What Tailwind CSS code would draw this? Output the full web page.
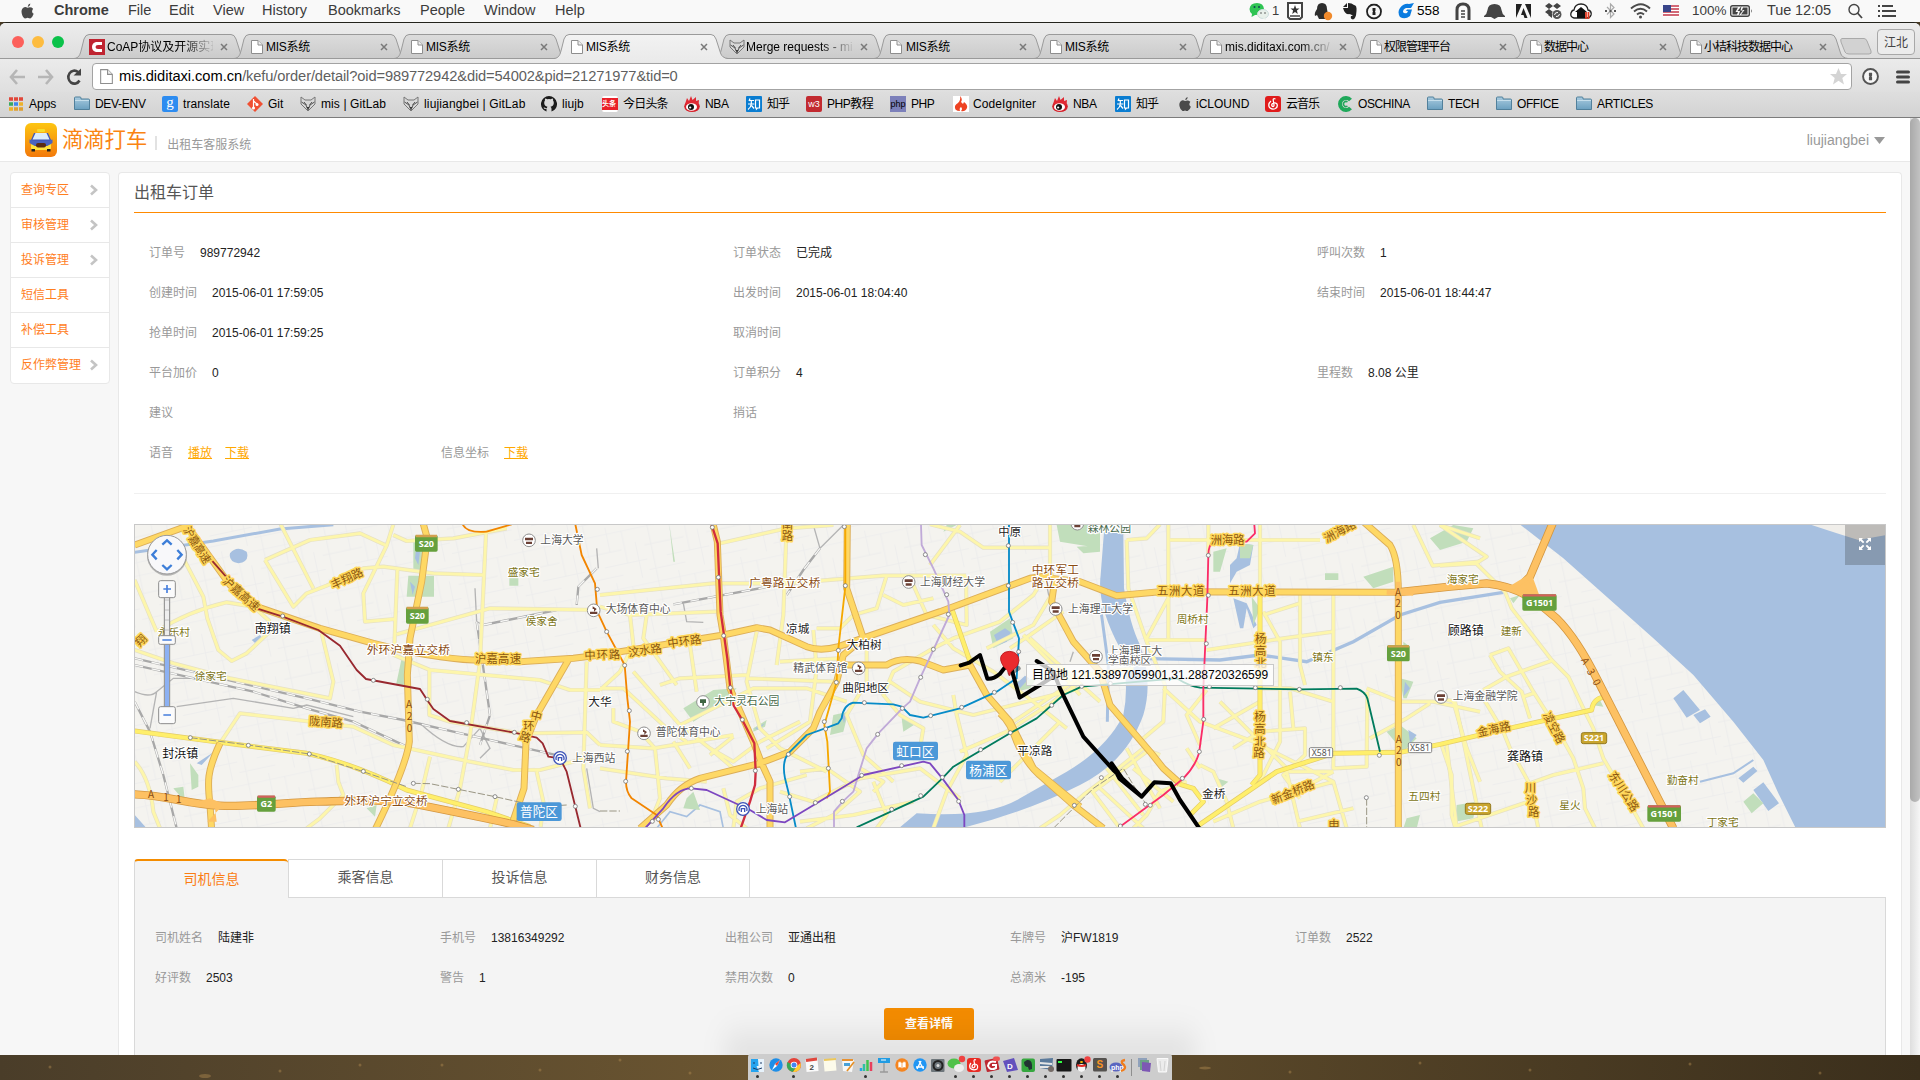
<!DOCTYPE html>
<html lang="zh-CN">
<head>
<meta charset="utf-8">
<title>MIS系统</title>
<script src="https://cdn.jsdelivr.net/npm/@tailwindcss/browser@4"></script>
</head>
<body class="w-[1920px] h-[1080px] overflow-hidden bg-[#4a3b24] font-['Liberation_Sans','Noto_Sans_CJK_SC',sans-serif] text-xs text-black">

<svg class="absolute size-0">
  <defs>
    <linearGradient id="gTab" x1="0" y1="0" x2="0" y2="1"><stop offset="0" stop-color="#dcdcdc"/><stop offset="1" stop-color="#cbcbcb"/></linearGradient>
    <linearGradient id="gOn" x1="0" y1="0" x2="0" y2="1"><stop offset="0" stop-color="#f2f2f2"/><stop offset="1" stop-color="#ebebeb"/></linearGradient>
    <linearGradient id="gFold" x1="0" y1="0" x2="0" y2="1"><stop offset="0" stop-color="#a9cbdf"/><stop offset="1" stop-color="#6ba0c0"/></linearGradient>
    <linearGradient id="gLogo" x1="0" y1="0" x2="0" y2="1"><stop offset="0" stop-color="#fdc612"/><stop offset="1" stop-color="#f3790b"/></linearGradient>
    <symbol id="tab" viewBox="0 0 174 25" preserveAspectRatio="none"><path d="M0 24.5C5 24 6 21 7.500 15L10 5Q11.500 .5 15 .5H157Q160.500 .5 162 5L166.500 19Q168 24 174 24.500Z" fill="url(#gTab)" stroke="#9a9a9a"/></symbol>
    <symbol id="tabOn" viewBox="0 0 174 25" preserveAspectRatio="none"><path d="M0 25C5 24 6 21 7.500 15L10 5Q11.500 .5 15 .5H157Q160.500 .5 162 5L166.500 19Q168 24 174 25Z" fill="url(#gOn)"/><path d="M0 24.5C5 24 6 21 7.500 15L10 5Q11.500 .5 15 .5H157Q160.500 .5 162 5L166.500 19Q168 24 174 24.500" fill="none" stroke="#9a9a9a"/></symbol>
    <symbol id="page" viewBox="0 0 16 16"><path d="M2.500 1.500H9L13.500 6V14.500H2.500Z" fill="#fff" stroke="#8e8e8e"/><path d="M9 1.500V6H13.500" fill="#eee" stroke="#8e8e8e"/></symbol>
    <symbol id="x" viewBox="0 0 8 8"><path d="M1 1L7 7M7 1L1 7" stroke="#7a7a7a" stroke-width="1.500"/></symbol>
    <symbol id="folder" viewBox="0 0 16 16"><path d="M.5 3V2Q.5 1 1.500 1H6Q7 1 7 2V3H14.500Q15.500 3 15.500 4V13.500H.5Z" fill="url(#gFold)" stroke="#51809b"/><path d="M1 4.500H15" stroke="#c5deeb"/></symbol>
    <symbol id="fox" viewBox="0 0 16 16"><path d="M1 1L5 4H11L15 1V8L8 15L1 8Z" fill="#d8d8d8" stroke="#777"/><path d="M1.500 6L6 9L8 14L10 9L14.500 6M4 6L6.500 9M12 6L9.500 9" stroke="#555" fill="none"/><path d="M6.500 11H9.500L8 13Z" fill="#333"/></symbol>
    <symbol id="apple" viewBox="0 0 16 18"><path d="M11 1Q8.500 1.500 8.200 4.500Q10.800 4.300 11 1M8 5.500Q5.500 4 3.500 5.500Q1 7.500 1.800 11.500Q2.800 16 5.200 17Q6.500 17 8 16.300Q9.800 17 11 17Q13.500 15.500 14.600 12Q11.500 10 14 6.500Q11.500 4 8 5.500Z" fill="#4a4a4a"/></symbol>
    <symbol id="weibo" viewBox="0 0 16 16"><ellipse cx="8" cy="10.500" rx="7.800" ry="5.500" fill="#d5202a"/><path d="M1 8L3 2L5 5L7 0L8.500 4L12 1L12 5L15 4L14.500 9Z" fill="#e02a34"/><ellipse cx="7.500" cy="11" rx="5.500" ry="3.800" fill="#fff"/><circle cx="7" cy="11" r="3" fill="#111"/><circle cx="6.200" cy="11.500" r="1.100" fill="#fff"/></symbol>
    <symbol id="zhihu" viewBox="0 0 16 16"><rect width="16" height="16" rx="1" fill="#0a7dd1"/><path d="M4 2.500L3 5M3.500 4.500H8M2 8H8.300M5.300 4.500V8Q5 11.500 2 13.500M5.500 9.500L8 12.500M9.500 4H13.500V12H11.500L10.500 13V12H9.500Z" stroke="#fff" stroke-width="1.200" fill="none"/></symbol>
    <symbol id="onep" viewBox="0 0 16 16"><circle cx="8" cy="8" r="7" fill="#f6f6f6" stroke="currentColor" stroke-width="1.800"/><path d="M6.500 4.500H9.500V7L9 8L9.500 9V11.500H6.500V9L7 8L6.500 7Z" fill="currentColor"/></symbol>
    <symbol id="netease" viewBox="0 0 16 16"><rect width="16" height="16" rx="3" fill="#e01b1b"/><path d="M10.500 3Q8 2 8.200 4L9 9Q9 11 7.500 10.500Q6 9 7.500 7.500Q10 6 12 8Q13 11 10.500 12.500Q7 14 4.500 11.500Q2.500 8 6 5" stroke="#fff" stroke-width="1.300" fill="none"/></symbol>
    <symbol id="chev" viewBox="0 0 10 12"><path d="M2 1.500L7 6L2 10.500" stroke="#c4c4c4" stroke-width="2.600" fill="none"/></symbol>
  </defs>
</svg>

<!-- system menu bar -->
<header class="flex h-[22px] items-center bg-[#f9f9f9] text-[14.500px] text-[#3c3c3c]">
  <div class="w-[54px] pl-[20px]"><svg class="w-[15px] h-[18px]"><use href="#apple"/></svg></div>
  <b class="w-[74px]">Chrome</b><span class="w-[41px]">File</span><span class="w-[44px]">Edit</span><span class="w-[49px]">View</span><span class="w-[66px]">History</span><span class="w-[92px]">Bookmarks</span><span class="w-[64px]">People</span><span class="w-[71px]">Window</span><span>Help</span>
  <div class="ml-auto flex w-[671px] items-center text-[14px]">
    <svg class="w-[20px] h-[20px] mr-[3px]" viewBox="0 0 20 20"><path d="M8 2Q1 2 .5 8Q.5 11 3 13L2.500 16L6 14Q15 14 15 8Q14.500 2 8 2Z" fill="#2fc454"/><circle cx="5.500" cy="6" r="1" fill="#145"/><circle cx="10" cy="6" r="1" fill="#145"/><ellipse cx="14" cy="13" rx="5.500" ry="4.500" fill="#e8f0ea" stroke="#cdd"/><path d="M16 16L17 19L13 17" fill="#e8f0ea"/><circle cx="12" cy="12" r=".8" fill="#555"/><circle cx="16" cy="12" r=".8" fill="#555"/></svg>
    <span class="w-[15px] text-[13px]">1</span>
    <svg class="w-[27px] h-[18px]" viewBox="0 0 27 18"><path d="M1 1H15V15L13 17H3L1 15Z" fill="#fff" stroke="#444" stroke-width="2"/><path d="M8 3L9.200 6.500H12.500L9.900 8.500L10.800 12L8 10L5.200 12L6.100 8.500L3.500 6.500H6.800Z" fill="#333"/><path d="M3 14H13" stroke="#444" stroke-width="1.500"/></svg>
    <svg class="w-[28px] h-[19px]" viewBox="0 0 28 19"><path d="M8 1Q3 1 3 7Q0 11 1 14L3 13L5 17H12L15 12Q13 10 13 7Q13 1 8 1" fill="#2d2d2d"/><circle cx="14" cy="14" r="4.200" fill="#f08a2c"/></svg>
    <svg class="w-[24px] h-[19px]" viewBox="0 0 24 19"><path d="M1 5L5 1V5ZM6 1Q10 1 12 3Q15 3 14.500 9Q14 17 11 17.500Q8 17 9 14L11 14Q9 12 7 12Q3 13 1 6H6Z" fill="#222"/></svg>
    <svg class="w-[32px] h-[17px] text-[#222]" viewBox="0 0 32 16"><use href="#onep" width="16" height="16"/></svg>
    <svg class="w-[19px] h-[18px]" viewBox="0 0 19 18"><path d="M16 1L13 6H8Q5 7 5 10Q6 12 9 11L10 9H8L9 7.500H14L12 14Q7 18 2 15Q-1 10 2 6Q6 1 11 2Z" fill="#0b7ce0"/></svg>
    <span class="w-[38px] text-[13.500px] text-black">558</span>
    <svg class="w-[29px] h-[19px]" viewBox="0 0 29 19"><path d="M2 18V8Q2 2 8 2T14 8V18" fill="none" stroke="#444" stroke-width="3"/><path d="M5 18V9Q5 5 8 5T11 9V18" fill="none" stroke="#fff" stroke-width="1"/><path d="M6 9H10M6 12H10M6 15H10" stroke="#444" stroke-width="1.600"/></svg>
    <svg class="w-[32px] h-[18px]" viewBox="0 0 32 18"><path d="M0 14Q3 12 3.500 8Q4 2 10.500 2T17.500 8Q18 12 21 14V15H0ZM7 15H14L10.500 17Z" fill="#444"/></svg>
    <svg class="w-[28px] h-[16px]" viewBox="0 0 28 16"><path d="M0 1H6L0 15ZM9 1H15V15ZM7.500 5L11.500 15H8.500L7.500 12H5Z" fill="#222"/></svg>
    <svg class="w-[26px] h-[18px]" viewBox="0 0 26 18"><path d="M5 1L9 4L5 7L1 4ZM13 1L17 4L13 7L9 4ZM5 7L9 10L5 13L1 10ZM4 13L8 11V16Z" fill="#444"/><circle cx="13" cy="12.500" r="4.500" fill="#555"/><path d="M10.500 13Q11 10 14 10.500M15.500 12Q15 15 12 14.500" stroke="#fff" fill="none"/></svg>
    <svg class="w-[35px] h-[19px]" viewBox="0 0 35 19"><path d="M4 16Q0 15 1 11Q2 8 4 8Q5 2 11 2T18 8Q22 9 21 13Q20 16 17 16Z" fill="#fff" stroke="#222" stroke-width="1.300"/><path d="M5 10L11 5L17 10H15V16H7V10Z" fill="#111"/><path d="M16 10V17M18.500 10V17" stroke="#e33a22" stroke-width="1.800"/></svg>
    <svg class="w-[25px] h-[18px]" viewBox="0 0 25 18"><path d="M2 5L9 12L5.500 15.500V2L9 5.500L2 12.500" fill="none" stroke="#aaa" stroke-width="1.200"/><path d="M0 9H2M4.500 9H6.500M9 9H11" stroke="#555" stroke-width="2"/></svg>
    <svg class="w-[33px] h-[18px]" viewBox="0 0 33 18"><path d="M1 6.500Q11 -2 20 6.500M4 9.500Q10.500 4 17 9.500M7 12.500Q10.500 9.500 14 12.500" fill="none" stroke="#4a4a4a" stroke-width="1.900"/><circle cx="10.500" cy="15" r="1.500" fill="#4a4a4a"/></svg>
    <svg class="w-[29px] h-[14px]" viewBox="0 0 29 14"><rect y="1" width="16" height="12" fill="#fff"/><path d="M0 2H16M0 5H16M0 8H16M0 11H16" stroke="#c4374a" stroke-width="1.300"/><rect y="1" width="8" height="7" fill="#38458a"/></svg>
    <span class="w-[38px] text-[13.500px]">100%</span>
    <svg class="w-[37px] h-[16px]" viewBox="0 0 37 16"><rect x=".7" y="2.700" width="18.600" height="10.600" rx="2" fill="none" stroke="#444" stroke-width="1.400"/><path d="M21 6Q22.500 8 21 10Z" fill="#444"/><path d="M2.500 4.500H8L5.500 9H8L7 11.500H2.500ZM17.500 11.500H11L14.500 7H12L13 4.500H17.500Z" fill="#444"/><path d="M11.500 3L7.500 8H10L8.500 13L13 7.500H10.500Z" fill="#444"/></svg>
    <span class="w-[81px] text-[14.500px] tracking-[-0.1px]">Tue 12:05</span>
    <svg class="w-[30px] h-[16px]" viewBox="0 0 30 16"><circle cx="6" cy="6.500" r="5" fill="none" stroke="#444" stroke-width="1.400"/><path d="M9.500 10L14 15" stroke="#444" stroke-width="1.800"/></svg>
    <svg class="w-[18px] h-[14px]" viewBox="0 0 18 14"><path d="M4 2H15M4 7H18M4 12H18M0 2H2M0 7H2M0 12H2" stroke="#444" stroke-width="2"/></svg>
  </div>
</header>

<div class="relative h-[1033px] rounded-t-md border-t border-[#23231c] bg-white overflow-hidden">
  <!-- tab strip -->
  <div class="relative flex h-[36px] items-end border-b border-[#9a9a9a] bg-linear-to-b from-[#ededed] to-[#dedede] pl-[74px]">
    <div class="absolute top-[13px] left-[12px] flex gap-[8px]"><i class="size-[12px] rounded-full bg-[#fc605b]"></i><i class="size-[12px] rounded-full bg-[#fdbc40]"></i><i class="size-[12px] rounded-full bg-[#0bc24a]"></i></div>
    <div class="relative w-[160px] h-[24px]"><svg class="absolute w-[174px] h-[25px]"><use href="#tab"/></svg><div class="relative flex h-full items-center pt-[2px] pl-[15px]">
      <svg class="size-4" viewBox="0 0 16 16"><rect width="16" height="16" fill="#bf2431"/><path d="M13 3H7Q3 4 3 8T7 13H13V10H9Q6.500 10 6.500 8T9 6H13Z" fill="#fff"/></svg><span class="ml-[2px] w-[106px] overflow-hidden whitespace-nowrap bg-linear-to-r from-black from-70% to-black/10 bg-clip-text text-transparent">CoAP协议及开源实现</span><svg class="ml-[7px] size-[8px]"><use href="#x"/></svg></div></div>
    <div class="relative w-[160px] h-[24px]"><svg class="absolute w-[174px] h-[25px]"><use href="#tab"/></svg><div class="relative flex h-full items-center pt-[2px] pl-[15px]"><svg class="size-4"><use href="#page"/></svg><span class="ml-[1px] w-[114px] tracking-[-0.3px]">MIS系统</span><svg class="size-[8px]"><use href="#x"/></svg></div></div>
    <div class="relative w-[160px] h-[24px]"><svg class="absolute w-[174px] h-[25px]"><use href="#tab"/></svg><div class="relative flex h-full items-center pt-[2px] pl-[15px]"><svg class="size-4"><use href="#page"/></svg><span class="ml-[1px] w-[114px] tracking-[-0.3px]">MIS系统</span><svg class="size-[8px]"><use href="#x"/></svg></div></div>
    <div class="relative z-10 w-[160px] h-[24px]"><svg class="absolute w-[174px] h-[25px]"><use href="#tabOn"/></svg><div class="relative flex h-full items-center pt-[2px] pl-[15px]"><svg class="size-4"><use href="#page"/></svg><span class="ml-[1px] w-[114px] tracking-[-0.3px]">MIS系统</span><svg class="size-[8px]"><use href="#x"/></svg></div></div>
    <div class="relative w-[160px] h-[24px]"><svg class="absolute w-[174px] h-[25px]"><use href="#tab"/></svg><div class="relative flex h-full items-center pt-[2px] pl-[15px]"><svg class="size-4"><use href="#fox"/></svg><span class="ml-[1px] w-[106px] overflow-hidden whitespace-nowrap bg-linear-to-r from-black from-70% to-black/10 bg-clip-text text-transparent">Merge requests - mis</span><svg class="ml-[8px] size-[8px]"><use href="#x"/></svg></div></div>
    <div class="relative w-[160px] h-[24px]"><svg class="absolute w-[174px] h-[25px]"><use href="#tab"/></svg><div class="relative flex h-full items-center pt-[2px] pl-[14px]"><svg class="size-4"><use href="#page"/></svg><span class="ml-[2px] w-[113px] tracking-[-0.3px]">MIS系统</span><svg class="size-[8px]"><use href="#x"/></svg></div></div>
    <div class="relative w-[160px] h-[24px]"><svg class="absolute w-[174px] h-[25px]"><use href="#tab"/></svg><div class="relative flex h-full items-center pt-[2px] pl-[14px]"><svg class="size-4"><use href="#page"/></svg><span class="ml-[1px] w-[114px] tracking-[-0.3px]">MIS系统</span><svg class="size-[8px]"><use href="#x"/></svg></div></div>
    <div class="relative w-[160px] h-[24px]"><svg class="absolute w-[174px] h-[25px]"><use href="#tab"/></svg><div class="relative flex h-full items-center pt-[2px] pl-[14px]"><svg class="size-4"><use href="#page"/></svg><span class="ml-[1px] w-[106px] overflow-hidden whitespace-nowrap bg-linear-to-r from-black from-70% to-black/10 bg-clip-text text-transparent">mis.diditaxi.com.cn/</span><svg class="ml-[8px] size-[8px]"><use href="#x"/></svg></div></div>
    <div class="relative w-[160px] h-[24px]"><svg class="absolute w-[174px] h-[25px]"><use href="#tab"/></svg><div class="relative flex h-full items-center pt-[2px] pl-[14px]"><svg class="size-4"><use href="#page"/></svg><span class="w-[115px] tracking-[-1px]">权限管理平台</span><svg class="size-[8px]"><use href="#x"/></svg></div></div>
    <div class="relative w-[160px] h-[24px]"><svg class="absolute w-[174px] h-[25px]"><use href="#tab"/></svg><div class="relative flex h-full items-center pt-[2px] pl-[14px]"><svg class="size-4"><use href="#page"/></svg><span class="w-[115px] tracking-[-1px]">数据中心</span><svg class="size-[8px]"><use href="#x"/></svg></div></div>
    <div class="relative w-[160px] h-[24px]"><svg class="absolute w-[174px] h-[25px]"><use href="#tab"/></svg><div class="relative flex h-full items-center pt-[2px] pl-[14px]"><svg class="size-4"><use href="#page"/></svg><span class="w-[115px] tracking-[-1px]">小桔科技数据中心</span><svg class="size-[8px]"><use href="#x"/></svg></div></div>
    <svg class="ml-[5px] mb-[3px] w-[34px] h-[17px]" viewBox="0 0 34 17"><path d="M3 .5H25Q27 .5 28 3L32 13Q33 16 30 16H10Q7 16 6 14L2 4Q1 .5 3 .5Z" fill="#d2d2d2" stroke="#a9a9a9"/></svg>
    <div class="ml-[4px] mb-[3px] flex h-[26px] w-[38px] items-center justify-center rounded border border-[#a8a8a8] bg-[#ececec] pt-[2px] text-[#444]">江北</div>
  </div>
  <!-- toolbar -->
  <div class="flex h-[33px] items-center bg-linear-to-b from-[#ebebeb] to-[#dfdfdf] pt-[2px] pl-[9px]">
    <svg class="w-[83px] h-[22px]" viewBox="0 0 83 22"><path d="M8 4L2 11L8 18M2 11H16M37 4L43 11L37 18M43 11H29" stroke="#b6b6b6" stroke-width="2.600" fill="none"/><path d="M70.500 14.500A6 6.500 0 1 1 69 6" stroke="#444" stroke-width="2.600" fill="none"/><path d="M72 2.500V9.500H64.500Z" fill="#444"/></svg>
    <div class="flex h-[27px] w-[1760px] items-center rounded-sm border border-[#a3a3a3] bg-white pl-[5px] text-[14.700px]"><svg class="mr-[4px] size-[17px]"><use href="#page"/></svg><span class="tracking-[-0.05px]">mis.diditaxi.com.cn</span><span class="tracking-[-0.13px] text-[#5f5f5f]">/kefu/order/detail?oid=989772942&amp;did=54002&amp;pid=21271977&amp;tid=0</span>
      <svg class="ml-auto mr-[4px] size-[17px]" viewBox="0 0 17 17"><path d="M8.500 0L11 6H17L12.300 10L14 16.500L8.500 12.700L3 16.500L4.700 10L0 6H6Z" fill="#d4d4d4"/></svg></div>
    <svg class="ml-[10px] size-[17px] text-[#555]"><use href="#onep"/></svg>
    <svg class="ml-[17px] w-[14px] h-[14px]" viewBox="0 0 14 14"><path d="M1.500 2H12.500M1.500 7H12.500M1.500 12H12.500" stroke="#444" stroke-width="3" stroke-linecap="round"/></svg>
  </div>
  <!-- bookmarks -->
  <div class="flex h-[26px] items-center border-b border-[#7c7c7c] bg-linear-to-b from-[#dedede] to-[#d3d3d3] pb-[2px] pl-[9px] whitespace-nowrap">
    <div class="flex w-[65px] items-center gap-[6px]"><svg class="size-[14px]" viewBox="0 0 14 14"><path d="M0 2H4M5 2H9M10 2H14" stroke="#e0473a" stroke-width="3.500"/><path d="M0 7H4" stroke="#39a861" stroke-width="3.500"/><path d="M5 7H9" stroke="#3e86ee" stroke-width="3.500"/><path d="M10 7H14M0 12H4" stroke="#edb22a" stroke-width="3.500"/><path d="M5 12H9M10 12H14" stroke="#e0a030" stroke-width="3.500"/></svg>Apps</div>
    <div class="flex w-[88px] items-center gap-[5px]"><svg class="size-4"><use href="#folder"/></svg><span class="tracking-[-0.3px]">DEV-ENV</span></div>
    <div class="flex w-[85px] items-center gap-[5px]"><span class="flex size-4 items-center justify-center rounded-[2px] bg-[#2d8cf0] font-['Liberation_Serif',serif] text-[15px] leading-none text-white pb-[3px]">g</span><span class="tracking-[0.100px]">translate</span></div>
    <div class="flex w-[53px] items-center gap-[5px]"><svg class="size-4" viewBox="0 0 16 16"><path d="M8 0L16 8L8 16L0 8Z" fill="#f05033"/><path d="M6.500 3V13M6.500 5L10 8" stroke="#fff" stroke-width="1.200"/><circle cx="6.500" cy="12" r="1.500" fill="#fff"/><circle cx="10" cy="8.500" r="1.500" fill="#fff"/></svg>Git</div>
    <div class="flex w-[103px] items-center gap-[5px]"><svg class="size-4"><use href="#fox"/></svg><span class="tracking-[0.100px]">mis | GitLab</span></div>
    <div class="flex w-[138px] items-center gap-[5px]"><svg class="size-4"><use href="#fox"/></svg><span class="tracking-[0.150px]">liujiangbei | GitLab</span></div>
    <div class="flex w-[61px] items-center gap-[5px]"><svg class="size-4" viewBox="0 0 16 16"><path d="M8 0A8 8 0 0 0 5.500 15.600V13Q3 13.500 2.500 11.500Q4 11 5 12.500L6 12Q6 11 6.500 10.700Q3.200 10 3.200 7Q3.200 5.500 4 4.600Q3.700 3.500 4.200 2.500Q5.200 2.500 6.300 3.300Q8 2.800 9.700 3.300Q10.800 2.500 11.800 2.500Q12.300 3.500 12 4.600Q12.800 5.500 12.800 7Q12.800 10 9.500 10.700Q10.500 11.500 10.500 13V15.600A8 8 0 0 0 8 0Z" fill="#1b1b1b"/></svg><span class="tracking-[0.100px]">liujb</span></div>
    <div class="flex w-[82px] items-center gap-[5px]"><span class="flex size-4 items-center rounded-[2px] border-y-2 border-white bg-[#ea1f28] text-[7px] font-bold leading-none text-white">头条</span><span class="tracking-[-0.8px]">今日头条</span></div>
    <div class="flex w-[62px] items-center gap-[5px]"><svg class="size-4"><use href="#weibo"/></svg><span class="tracking-[-0.3px]">NBA</span></div>
    <div class="flex w-[60px] items-center gap-[5px]"><svg class="size-4"><use href="#zhihu"/></svg><span class="tracking-[-1px]">知乎</span></div>
    <div class="flex w-[84px] items-center gap-[5px]"><span class="flex size-4 items-center justify-center rounded-[2px] bg-[#c22a30] text-[9px] text-white">w3</span><span class="tracking-[-0.5px]">PHP教程</span></div>
    <div class="flex w-[63px] items-center gap-[5px]"><span class="flex size-4 items-center justify-center bg-[#7c80ba] text-[9px] text-black">php</span><span class="tracking-[-0.4px]">PHP</span></div>
    <div class="flex w-[99px] items-center gap-[4px]"><svg class="size-4" viewBox="0 0 16 16"><rect width="16" height="16" fill="#fff"/><path d="M7 0Q10 3 8 6L10 8L11 6Q15 9 14 12Q12 16 8 15Q10 13 8 11Q6 12 7 15Q1 15 2 10Q3 8 5 7Q8 4 7 0Z" fill="#ee4323"/></svg><span class="tracking-[0.100px]">CodeIgniter</span></div>
    <div class="flex w-[63px] items-center gap-[5px]"><svg class="size-4"><use href="#weibo"/></svg><span class="tracking-[-0.3px]">NBA</span></div>
    <div class="flex w-[62px] items-center gap-[5px]"><svg class="size-4"><use href="#zhihu"/></svg><span class="tracking-[-1px]">知乎</span></div>
    <div class="flex w-[88px] items-center gap-[3px]"><svg class="size-4"><use href="#apple"/></svg><span>iCLOUND</span></div>
    <div class="flex w-[72px] items-center gap-[5px]"><svg class="size-4"><use href="#netease"/></svg><span class="tracking-[-1px]">云音乐</span></div>
    <div class="flex w-[90px] items-center gap-[5px]"><svg class="size-4" viewBox="0 0 16 16"><path d="M13.500 4A6 6 0 1 0 13.500 12" fill="none" stroke="#1fa85a" stroke-width="4"/><path d="M10.500 6A2.500 2.500 0 1 0 10.500 10" fill="none" stroke="#1fa85a" stroke-width="1.500"/></svg><span class="tracking-[-0.400px]">OSCHINA</span></div>
    <div class="flex w-[69px] items-center gap-[5px]"><svg class="size-4"><use href="#folder"/></svg><span class="tracking-[-0.4px]">TECH</span></div>
    <div class="flex w-[80px] items-center gap-[5px]"><svg class="size-4"><use href="#folder"/></svg><span class="tracking-[-0.4px]">OFFICE</span></div>
    <div class="flex items-center gap-[5px]"><svg class="size-4"><use href="#folder"/></svg><span class="tracking-[-0.3px]">ARTICLES</span></div>
  </div>

  <!-- web page -->
  <div class="flex h-[937px]">
    <div class="flex w-[1910px] flex-col bg-[#f7f7f7]">
      <div class="flex h-[44px] items-center border-b border-[#e8e8e8] bg-white pl-[25px]">
        <svg class="w-[32px] h-[34px]" viewBox="0 0 32 34"><rect width="32" height="34" rx="6" fill="url(#gLogo)"/><rect x="12" y="6" width="8" height="3" rx="1" fill="#f7dd2d"/><path d="M9 10H23L26 17V24H6V17Z" fill="#3d55b5"/><path d="M10.500 10H21.500L24.500 16.500H7.500Z" fill="#dcecfa"/><path d="M4.500 16.500L8 17.500H24L27.500 16.500V20L24 22H8L4.500 20Z" fill="#4a63c0"/><path d="M6 21L10 23H22L26 21V25Q26 27 24 27H8Q6 27 6 25Z" fill="#ffe23c"/><rect x="11" y="20" width="10" height="4.500" rx="2" fill="#5a2c12"/><rect x="6.500" y="26" width="3.500" height="2.500" fill="#222"/><rect x="22" y="26" width="3.500" height="2.500" fill="#222"/></svg>
        <span class="ml-[5px] mt-[3px] text-[21.300px] leading-none text-[#fa8412]">滴滴打车</span>
        <span class="ml-[8px] mt-[7px] h-[14px] w-[2px] bg-[#e2e2e2]"></span>
        <span class="ml-[10px] mt-[11px] text-[#999]">出租车客服系统</span>
        <span class="ml-auto mt-[2px] text-[14px] text-[#999]">liujiangbei</span><svg class="ml-[5px] mr-[25px] mt-[2px] w-[11px] h-[7px]" viewBox="0 0 11 7"><path d="M0 0H11L5.500 7Z" fill="#999"/></svg>
      </div>
      <div class="flex flex-1 pt-[10px] pl-[10px]">
        <nav class="h-[212px] w-[100px] rounded border border-[#e8e8e8] bg-white text-[#ff7e1e]">
          <div class="flex h-[35px] items-center justify-between border-b border-[#e8e8e8] pl-[10px] pr-[10px]">查询专区<svg class="w-[10px] h-[12px]"><use href="#chev"/></svg></div>
          <div class="flex h-[35px] items-center justify-between border-b border-[#e8e8e8] pl-[10px] pr-[10px]">审核管理<svg class="w-[10px] h-[12px]"><use href="#chev"/></svg></div>
          <div class="flex h-[35px] items-center justify-between border-b border-[#e8e8e8] pl-[10px] pr-[10px]">投诉管理<svg class="w-[10px] h-[12px]"><use href="#chev"/></svg></div>
          <div class="flex h-[35px] items-center border-b border-[#e8e8e8] pl-[10px]">短信工具</div>
          <div class="flex h-[35px] items-center border-b border-[#e8e8e8] pl-[10px]">补偿工具</div>
          <div class="flex h-[34px] items-center justify-between pl-[10px] pr-[10px]">反作弊管理<svg class="w-[10px] h-[12px]"><use href="#chev"/></svg></div>
        </nav>
        <main class="ml-[8px] w-[1784px] rounded-t border border-b-0 border-[#e8e8e8] bg-white px-[15px]">
          <h1 class="h-[40px] border-b border-[#ff8a00] text-[16px] leading-[39px] text-[#555]">出租车订单</h1>
          <div class="grid h-[281px] grid-cols-[584px_584px_auto] content-start border-b border-[#f0f0f0] pt-[20px] pl-[15px] leading-10 text-[#222] [&_i]:mr-[15px] [&_i]:not-italic [&_i]:text-[#999] [&>div]:h-10">
            <div><i>订单号</i>989772942</div><div><i>订单状态</i>已完成</div><div><i>呼叫次数</i>1</div>
            <div><i>创建时间</i>2015-06-01 17:59:05</div><div><i>出发时间</i>2015-06-01 18:04:40</div><div><i>结束时间</i>2015-06-01 18:44:47</div>
            <div><i>抢单时间</i>2015-06-01 17:59:25</div><div class="col-span-2"><i>取消时间</i></div>
            <div><i>平台加价</i>0</div><div><i>订单积分</i>4</div><div><i>里程数</i>8.08 公里</div>
            <div><i>建议</i></div><div class="col-span-2"><i>捎话</i></div>
            <div class="flex"><span class="w-[292px]"><i>语音</i><a class="mr-[13px] text-[#ffa800] underline">播放</a><a class="text-[#ffa800] underline">下载</a></span><span><i>信息坐标</i><a class="text-[#ffa800] underline">下载</a></span></div>
          </div>
          <!-- map -->
          <div class="relative mt-[30px] h-[304px] w-[1752px] border border-[#c8c8c8] bg-[#f4f3ef]">
<svg class="h-[302px] w-[1750px]" viewBox="45 30 5250 906" font-family="'Noto Sans CJK SC',sans-serif" font-size="34">
<defs>
<pattern id="streets" width="190" height="170" patternUnits="userSpaceOnUse" patternTransform="rotate(-12)"><path d="M0 20H190M0 75H120M60 118H190M20 0V170M85 0V75M130 20V118M165 60V170M0 150H110" stroke="#ececec" stroke-width="2.500" fill="none"/></pattern>
<g id="minor">
<g><path d="M44 195L110 350M44 405L160 445L330 490L630 550L640 500L605 355M110 350Q200 290 320 262L400 275L450 320M190 130L250 245L262 310L295 405L335 438L380 415L460 340M435 135L520 275L560 235L620 212L730 160L790 155L940 175L1090 180M435 135L570 75L720 55L800 92L730 235L735 320L825 312M482 28L580 220M800 92L820 28M820 60L860 78L1000 70L1160 40M832 165L822 420L930 465L1260 495L1350 525L1440 525M1098 55L1080 440L1050 660L1020 820L985 940M830 358L1110 280L1440 285M928 465V600L990 620L1200 655L1400 652L1440 690M44 740Q90 790 100 890L120 940M300 685L360 595L700 635L820 690L1050 740L1180 765L1260 765L1440 720M930 725L905 830L870 940M1400 440L1390 760L1410 880M1250 770L1270 860L1262 935M650 750L655 800L670 840L600 910L560 940M1130 850L1110 940"/></g>
<g transform="translate(1440)"><path d="M0 240L340 205L560 205L850 182H1098M360 85L560 40L700 30M560 30L550 300L530 450M0 275L90 300L350 290M90 300L100 390L60 470L0 525M140 300L130 370L230 510M270 390L290 530M0 520L70 520L200 640L260 680M180 510L240 490L440 480M470 350L440 500L480 640L540 700L680 770M440 490L700 500M100 470L240 630L330 700L400 760M240 630L460 520L620 520L740 560M0 690L160 700L400 660M0 760L200 790L320 800M40 580L40 620L120 650L165 700L180 850L160 900M220 680L270 760M400 665L330 720M330 700L400 740L480 680L600 620M640 345L650 460L630 620L500 700M540 440L720 430M650 340L720 340L760 300L830 280L860 182M800 370V500L740 600L790 720L880 800M990 28L1080 50L1150 98H1350M1080 30L990 150M1350 30V160L1300 240L1200 320L1060 370L1000 400L880 470L850 540L900 600L970 640L960 700M940 210L980 300L1100 330L1098 182M850 240L910 270L1000 250M1000 330L1060 400L1180 470L1300 560L1400 640M1270 360L1380 470L1440 540M1060 540L1070 600L1100 720L1040 830L1000 940M1160 400L1300 330L1360 230M870 500L960 560L1120 600L1440 520M1080 710L1220 650L1360 560L1440 500M600 770L680 760L780 830L700 900L620 940M400 940L410 860L480 820L620 780M540 830L640 860L780 790L960 760L1080 850M820 800L860 900L830 940M780 760L850 800L820 830M370 820L390 900L440 940M600 920L760 900L940 860"/></g>
<g transform="translate(2640)"><path d="M505 28V370M380 75L385 220L440 380L495 510L490 620L430 670M380 75L440 70L480 28M625 28V120M510 75H960M780 30V240M440 375H620M440 370L510 240M620 405L850 370L1000 350M900 240V450L915 510M1000 240V760L1100 755L1102 530M790 290L840 380V680L780 800M790 300L900 265M780 520L870 520L1000 560M620 525L560 600L600 690M490 520L600 620L760 680L1000 800L1040 940M660 560L790 690L870 770L1000 770M640 640L780 560M870 530L880 640M700 700L780 650L915 640V720L850 780L900 850M600 760L560 700M600 750L640 770L680 860L700 940M1000 800L780 860L640 920M480 720L430 700L330 780L250 840L180 900L120 940M560 800L480 830L440 900L400 940M380 700L480 880M320 760L430 900M270 820L360 940M440 710L280 830M520 860L400 760M860 770L900 940M1000 770L870 840M1100 520L1200 560L1300 560L1440 590M1110 670L1220 610L1290 565M1360 560L1400 700L1440 800M1240 30L1298 152L1440 140M1320 30L1440 70M1060 880L890 920M430 940L300 820M180 620L60 740L0 800M40 620L250 480L400 460M90 370L200 470L300 560M30 400L90 360L190 290M1340 690L1370 940"/></g>
<g transform="translate(3960)"><path d="M0 30L140 125L108 145L0 152M108 145L195 230L215 280L335 435L385 485L430 580L460 640L490 730L560 850L610 940M150 420L205 400L280 530L350 640L400 730L430 820L435 880L465 940M150 420L180 470L245 530L270 610M130 525L200 485L335 437M130 550L190 650L210 700L265 800L295 940M45 560L75 700L125 940M5 690L35 780V900L45 935L265 860M270 805L340 780L490 745M250 545L280 535M0 550L45 560"/></g>
</g>
<g id="main">
<g><path d="M200 30L330 210L410 275L600 340L760 385Q940 430 1060 435L1200 440L1360 430L1440 420M908 20L922 70L905 200L870 370L862 480L868 680Q860 750 765 945M1345 435L1250 600L1218 680L1212 820L1170 945M300 685C260 770 262 800 270 870L275 945M44 90L205 32"/></g>
<g transform="translate(1440)"><path d="M0 420L370 360L470 338L510 345L620 395Q660 410 715 395L1020 290L1290 190L1360 180M340 30L352 80L360 300L370 360L390 520L460 680L485 745L510 800V940M742 20L740 220L790 370L730 420L710 500L660 590L640 640L570 710L480 745L300 790Q240 810 200 870L120 940M730 450H860Q900 425 960 438L1030 465L1110 450L1160 540L1230 620L1300 760L1440 875"/></g>
<g transform="translate(2640)"><path d="M150 190L240 200L350 242L480 230L1190 232M165 190L155 260L220 380L300 470L330 570L450 710L490 760L540 805M0 595Q30 620 50 680Q80 750 130 790L220 870L310 940M1090 20L1170 90Q1195 130 1195 232V945"/></g>
</g>
<g id="bright">
<path d="M44 648L300 682L560 715Q700 745 860 825L1100 890L1230 935M2495 280L2550 440M3420 230V650L3420 780L3395 810M3230 935L3470 770L3640 715L3840 712L3960 688L4100 655L4415 585Q4420 545 4465 545M3210 900L3250 860L3220 820L3180 808"/>
</g>
<g id="hwy"><path d="M44 838C150 842 200 868 300 872S500 862 590 860S800 850 900 870S1100 910 1180 928L1240 945M3830 232L3990 215L4100 205Q4190 215 4250 260L4310 310Q4370 370 4430 490L4660 940M4300 20L4230 185L4200 215"/></g>
<path id="railA" d="M44 430L560 550L720 590L850 615L1000 650L1330 725M44 450L400 530L560 580L700 620L860 695M44 560L90 650L130 780L170 940M1070 320L1110 600L1080 690M1090 330L1310 285M1660 268L2000 205M2100 100L2050 165L2000 240M1430 160L1375 215L1370 270"/>
</defs>
<rect width="5300" height="940" fill="#f4f3ef"/><rect width="5300" height="940" fill="url(#streets)"/>
<!-- water -->
<g fill="#a7c0e0">
<path d="M4202 30L4330 130L4600 370L4720 480L4840 620L4930 735L4975 835L5030 945H5300V28Z"/><path d="M5075 30Q5150 55 5215 75L5300 60V28Z" fill="#f0eeea"/>
<path d="M4660 550L4690 525L4740 585L4700 608ZM4720 600L4755 583L4772 605L4740 625ZM4855 790L4900 755L4912 768L4870 803ZM4900 825L4930 802L4977 865L4945 888Z"/>
<path d="M2952 50H3010L3012 220Q3030 330 3060 390Q3100 500 3070 600Q3020 740 2880 810Q2700 900 2500 945L2330 945L2390 895Q2600 910 2700 850L2840 770Q2960 700 3010 600Q3030 500 3000 400Q2930 270 2942 180Z"/>
<path d="M3330 150L3350 130L3360 85L3400 90L3390 150L3350 170L3330 205ZM3340 250L3380 265L3410 330L3400 340L3380 280L3370 340H3360Z"/>
<path d="M330 115Q350 90 380 110Q390 140 355 145Q325 140 330 115M395 375L420 360L430 375L410 388ZM230 745L280 712L245 750ZM44 900L80 940H44Z"/>
</g>
<g fill="none" stroke="#a7c0e0" stroke-width="9"><path d="M44 112L280 78L480 42L640 29"/><path d="M3050 430L3300 435L3420 420L3560 440L3700 380L3840 300L3960 262L4150 232" stroke-width="10"/><path d="M2942 280L2965 450L2962 620"/><path d="M4740 800L4840 775L4900 735" stroke-width="6"/><path d="M1610 940L1650 890L1700 905L1740 870L1800 890L1810 940" stroke-width="5"/></g>
<g fill="#c1debb">
<path d="M865 182H942V245H860ZM880 80H910L905 165H880ZM845 430H880L862 510H828ZM210 745L235 780V815L215 825ZM160 820L190 815L195 860ZM1168 190H1195V212H1168ZM1690 580L1780 525L1850 520L1800 570L1720 620ZM1900 640L1940 615L1935 635L1900 650ZM2140 600L2185 590L2170 650L2130 660ZM2610 350L2670 310L2680 370L2620 400ZM2345 610L2390 625L2350 650ZM2680 500L2750 490L2730 520L2690 530ZM1648 30L1665 140H1660ZM1700 850L1720 830L1740 885L1690 880ZM2480 30L2510 30L2470 50Z"/>
<path d="M2810 30H2940V100L2820 80ZM2870 95L2940 90V110L2890 115ZM3280 110L3320 100L3300 170H3280ZM3360 85L3400 90L3390 130L3360 130ZM3615 175H3655V195H3615ZM3730 185L3820 155V200L3760 220ZM3930 70L4000 30L4060 40L4040 80L3960 105ZM3395 245L3420 280L3400 330ZM3850 380L3870 395L3850 400ZM3840 490L3880 500L3860 550H3850ZM3800 650L3840 630L3890 670L3850 710ZM3860 910L3900 900L3890 940H3850ZM3290 790L3325 800L3300 820ZM4170 250L4200 240L4180 265ZM4415 570L4440 555L4450 575ZM4870 860L4900 835L4930 865L4895 895ZM4010 870L4070 860L4060 910L4005 920ZM740 880L770 870L765 905Z"/>
</g>
<g fill="#a7c0e0"><path d="M2622 360L2655 340L2672 352L2660 380L2635 390ZM2690 505L2715 482L2728 490L2700 520ZM890 90L900 110L895 150L885 130ZM870 200L885 215L878 240ZM2165 600L2180 596L2172 625ZM1905 640L1935 625L1915 645ZM3855 500L3870 520L3850 545ZM3865 645L3890 660L3870 685Z"/></g>
<!-- railways -->
<g fill="none"><path d="M170 575L340 550L520 580M44 530Q90 550 110 530L160 490L220 490M110 530L90 640M520 580L560 570L700 605M1065 220L1070 320L1090 330M900 625Q980 700 1030 695L1080 640L1110 700L1080 730M1430 100L1435 160M1400 760L1420 880L1440 890M2080 30L2100 100M2170 30L2100 100M1690 265L1700 320L1750 322M2780 210L2790 260M2860 410L2850 440" stroke="#b4b4b4" stroke-width="4"/>
<use href="#railA" stroke="#a8a8a8" stroke-width="7"/><use href="#railA" stroke="#f8f8f6" stroke-width="4" stroke-dasharray="26 26"/></g>
<!-- roads -->
<g fill="none" stroke-linejoin="round"><use href="#minor" stroke="#e6e0c4" stroke-width="12.500"/><use href="#minor" stroke="#fdf6ab" stroke-width="8.500"/>
<use href="#bright" stroke="#e3cc69" stroke-width="15"/><use href="#bright" stroke="#ffef6b" stroke-width="11"/>
<use href="#main" stroke="#dcae58" stroke-width="21"/><use href="#main" stroke="#fed865" stroke-width="15.500"/>
<use href="#hwy" stroke="#d3963f" stroke-width="25"/><use href="#hwy" stroke="#fdc163" stroke-width="20"/></g>
<path d="M270 850L225 862L300 880L262 920H290L285 880L325 872Z" fill="#fdc163"/><path d="M3835 200V270M3800 232L3880 235M4230 185L4250 240L4180 215Z" stroke="#fdc163" stroke-width="14" fill="#fdc163"/>
<!-- metro lines -->
<g fill="none" stroke-width="5.500" stroke-linejoin="round">
<path d="M270 130L340 210L410 280L488 305L595 345L660 392L710 465L738 492L900 522L925 560L940 582L990 618L1183 653L1250 668L1268 685L1285 725L1320 730L1340 770L1382 940" stroke="#98282f"/>
<path d="M1028 28Q1040 55 1100 50L1175 28M1366 28L1385 120L1425 205L1432 290L1460 350L1514 450L1522 550L1530 620L1518 800Q1518 830 1535 850L1610 900L1628 940" stroke="#f28500"/>
<path d="M1775 30L1793 85L1798 200L1802 290L1822 430L1831 520L1840 570L1867 615L1903 685L1907 770L1905 810L1890 860L1862 940" stroke="#d02c3e" stroke-width="7"/>
<path d="M2176 30L2176 215L2155 400L2150 500L2113 630L2122 680L2130 830L2120 850" stroke="#f5a800"/>
<path d="M2403 30L2405 90L2440 160L2485 260L2488 300L2440 405L2400 490L2370 560L2347 580L2275 655L2240 700L2215 780L2200 830L2168 860L2142 890V940" stroke="#c0aad8"/>
<path d="M2667 30V290L2680 325L2697 370L2690 490L2630 530L2520 580L2410 608L2370 600L2345 575L2320 568L2200 563Q2170 570 2165 610L2155 625L2115 640L2060 660L2005 715Q1985 740 1995 790L2005 830L2028 940" stroke="#068bc8"/>
<path d="M1575 940L1630 880Q1670 820 1714 820L1760 825L1890 885L1940 915L1995 922L2090 865L2230 780L2410 740L2430 745L2467 790L2515 855L2533 900V940" stroke="#7d47c0"/>
<path d="M2210 937L2410 845L2467 790L2500 755L2670 655L2750 610L2830 540L2885 515L3170 490Q3210 515 3240 518L3540 523L3710 521Q3735 530 3742 550L3780 710" stroke="#007b5d"/>
<path d="M3403 30L3405 55L3380 80L3280 80Q3265 90 3265 120L3262 250L3250 520V620L3237 715Q3225 755 3190 790L3130 840L3000 935" stroke="#fb2d67"/>
<path d="M211 668L385 690L568 717L730 770L860 815M880 805L930 806L1015 823L1125 845L1260 875L1340 870M3740 850V940M1440 888H1500M2800 940L2920 820L3010 760L3040 810L3080 870" stroke="#9a9684" stroke-width="3" stroke-dasharray="22 6"/>
</g>
<g fill="#fff" stroke="#777" stroke-width="2.500"><circle cx="488" cy="303" r="6"/><circle cx="760" cy="496" r="6"/><circle cx="922" cy="553" r="6"/><circle cx="1040" cy="623" r="6"/><circle cx="1183" cy="652" r="6"/><circle cx="211" cy="668" r="6"/><circle cx="385" cy="691" r="6"/><circle cx="568" cy="717" r="6"/><circle cx="730" cy="769" r="6"/><circle cx="880" cy="805" r="6"/><circle cx="1015" cy="823" r="6"/><circle cx="1125" cy="845" r="6"/><circle cx="1366" cy="874" r="6"/><circle cx="1432" cy="223" r="6"/><circle cx="1460" cy="350" r="6"/><circle cx="1514" cy="451" r="6"/><circle cx="1528" cy="587" r="6"/><circle cx="1522" cy="709" r="6"/><circle cx="1517" cy="799" r="6"/><circle cx="1615" cy="913" r="6"/><circle cx="1597" cy="919" r="6"/><circle cx="1777" cy="37" r="6"/><circle cx="1795" cy="187" r="6"/><circle cx="1811" cy="362" r="6"/><circle cx="1831" cy="518" r="6"/><circle cx="1867" cy="614" r="6"/><circle cx="1906" cy="767" r="6"/><circle cx="1714" cy="820" r="6"/><circle cx="2005" cy="718" r="6"/><circle cx="2173" cy="35" r="6"/><circle cx="2176" cy="212" r="6"/><circle cx="2155" cy="406" r="6"/><circle cx="2149" cy="502" r="6"/><circle cx="2113" cy="620" r="6"/><circle cx="2117" cy="642" r="6"/><circle cx="2125" cy="760" r="6"/><circle cx="2233" cy="563" r="6"/><circle cx="2416" cy="119" r="6"/><circle cx="2480" cy="239" r="6"/><circle cx="2485" cy="298" r="6"/><circle cx="2440" cy="403" r="6"/><circle cx="2402" cy="487" r="6"/><circle cx="2347" cy="580" r="6"/><circle cx="2273" cy="658" r="6"/><circle cx="2225" cy="781" r="6"/><circle cx="2345" cy="752" r="6"/><circle cx="2167" cy="859" r="6"/><circle cx="2086" cy="863" r="6"/><circle cx="2009" cy="845" r="6"/><circle cx="2315" cy="883" r="6"/><circle cx="2402" cy="842" r="6"/><circle cx="2467" cy="787" r="6"/><circle cx="2516" cy="859" r="6"/><circle cx="2582" cy="704" r="6"/><circle cx="2671" cy="653" r="6"/><circle cx="2432" cy="602" r="6"/><circle cx="2525" cy="577" r="6"/><circle cx="2623" cy="532" r="6"/><circle cx="2696" cy="410" r="6"/><circle cx="2678" cy="322" r="6"/><circle cx="2665" cy="212" r="6"/><circle cx="2665" cy="92" r="6"/><circle cx="2795" cy="571" r="6"/><circle cx="2885" cy="514" r="6"/><circle cx="2971" cy="505" r="6"/><circle cx="3265" cy="121" r="6"/><circle cx="3265" cy="241" r="6"/><circle cx="3259" cy="386" r="6"/><circle cx="3268" cy="515" r="6"/><circle cx="3406" cy="518" r="6"/><circle cx="3538" cy="523" r="6"/><circle cx="3661" cy="518" r="6"/><circle cx="3778" cy="721" r="6"/><circle cx="3251" cy="613" r="6"/><circle cx="3238" cy="710" r="6"/><circle cx="3187" cy="790" r="6"/><circle cx="3091" cy="871" r="6"/><circle cx="3076" cy="868" r="6"/><circle cx="2944" cy="788" r="6"/><circle cx="2863" cy="871" r="6"/><circle cx="3001" cy="933" r="6"/><circle cx="3739" cy="848" r="6"/></g>
<!-- points of interest -->
<g stroke="#8e8e8e" stroke-width="3" fill="#fff"><circle cx="1227" cy="76" r="19"/><circle cx="1421" cy="286" r="19"/><circle cx="1749" cy="561" r="19"/><circle cx="1572" cy="655" r="19"/><circle cx="2366" cy="201" r="19"/><circle cx="2216" cy="460" r="19"/><circle cx="2807" cy="282" r="19"/><circle cx="2928" cy="425" r="19"/><circle cx="2872" cy="26" r="19"/><circle cx="3963" cy="546" r="19"/></g>
<g stroke="#3d54b8" stroke-width="4" fill="#fff"><circle cx="1320" cy="729" r="19"/><circle cx="1869" cy="882" r="19"/><path d="M1309 735A12 12 0 1 1 1331 735M1315 738V728H1325V738M1858 888A12 12 0 1 1 1880 888M1864 891V881H1874V891" fill="none"/></g>
<g fill="#6b4035"><path id="cap" d="M1215 68H1239V76H1215ZM1218 80H1236V87H1218Z"/><use href="#cap" x="1139" y="125"/><use href="#cap" x="1580" y="206"/><use href="#cap" x="1701" y="349"/><use href="#cap" x="2736" y="470"/><use href="#cap" x="1645" y="-50"/><path id="sp" d="M1410 290H1432V297H1410ZM1418 274L1430 282L1422 290V282H1418Z"/><use href="#sp" x="151" y="369"/><use href="#sp" x="795" y="174"/><path d="M1740 553H1758V564H1740ZM1747 564H1752V572H1747Z" fill="#3f6643"/></g>
<!-- road names -->
<g fill="#8a5610" stroke="#ffd75a" stroke-width="9" stroke-linejoin="round" paint-order="stroke">
<g transform="translate(188 44) rotate(58)"><text textLength="125">沪嘉高速</text></g><g transform="translate(305 200) rotate(42)"><text textLength="135">沪嘉高速</text></g>
<g transform="translate(640 223) rotate(-25)"><text>丰翔路</text></g><text x="1065" y="445" textLength="138">沪嘉高速</text><text x="566" y="630" transform="rotate(4 566 630)">陇南路</text>
<text x="1232" y="613" transform="rotate(15 1240 600)">中</text><text x="1210" y="646">环</text><text x="1199" y="678" transform="rotate(20 1215 665)">路</text>
<text x="1393" y="432" textLength="108" transform="rotate(-2 1440 420)">中环路</text><text x="1526" y="425" transform="rotate(-8 1526 425)">汶水路</text><text x="1644" y="398" transform="rotate(-8 1644 398)">中环路</text>
<text x="1985" y="42">南</text><text x="1985" y="75">路</text>
<text x="3272" y="87">洲海路</text><text x="3620" y="83" transform="rotate(-28 3620 83)">洲海路</text><text x="3111" y="239" textLength="142">五洲大道</text><text x="3325" y="240" textLength="142">五洲大道</text>
<text x="3405" y="384">杨</text><text x="3405" y="420">高</text><text x="3405" y="455">北</text><text x="3403" y="619">杨</text><text x="3403" y="655">高</text><text x="3403" y="692">北</text><text x="3400" y="727">路</text>
<text x="3460" y="868" transform="rotate(-22 3460 868)">新金桥路</text><text x="4074" y="665" transform="rotate(-12 4074 665)">金海路</text>
<g transform="translate(4268 600) rotate(62)"><text textLength="100">凌空路</text></g><text x="4214" y="832">川</text><text x="4218" y="868">沙</text><text x="4224" y="904">路</text><g transform="translate(4465 780) rotate(57)"><text textLength="134">东川公路</text></g>
<text x="44" y="390" transform="rotate(-45 60 375)">翔</text><text x="3625" y="942">申</text>
</g>
<g fill="#8a4b12" font-size="30"><text x="858" y="580">A</text><text x="860" y="615">2</text><text x="860" y="650">0</text><text x="84" y="850">A</text><text x="130" y="858">1</text><text x="168" y="864">1</text><text x="3825" y="243">A</text><text x="3826" y="277">2</text><text x="3826" y="311">0</text><text x="3827" y="684">A</text><text x="3828" y="718">2</text><text x="3828" y="752">0</text><g transform="translate(4382 435) rotate(62)"><text textLength="90">A30</text></g></g>
<!-- place names -->
<g stroke="#fff" stroke-width="7" stroke-linejoin="round" paint-order="stroke">
<g fill="#8a4b12" font-size="35"><text x="740" y="416" textLength="250">外环沪嘉立交桥</text><text x="673" y="871" textLength="250">外环沪宁立交桥</text><text x="1887" y="217" textLength="214">广粤路立交桥</text><text x="2735" y="178" textLength="142">中环军工</text><text x="2735" y="215" textLength="142">路立交桥</text></g>
<g fill="#111" font-size="36"><text x="404" y="354">南翔镇</text><text x="127" y="728">封浜镇</text><text x="3983" y="359">顾路镇</text><text x="4161" y="738">龚路镇</text></g>
<g fill="#222" font-size="35"><text x="1405" y="572">大华</text><text x="1998" y="353">凉城</text><text x="2180" y="401">大柏树</text><text x="2167" y="531">曲阳地区</text><text x="2635" y="62" font-size="34">中原</text><text x="2692" y="719">平凉路</text><text x="3246" y="848">金桥</text></g>
<g fill="#7d7516" font-size="32"><text x="114" y="362">永乐村</text><text x="224" y="495">徐家宅</text><text x="1163" y="183">盛家宅</text><text x="1217" y="330">侯家舍</text><text x="3170" y="324">周桥村</text><text x="3577" y="437">镇东</text><text x="3865" y="855">五四村</text><text x="3980" y="205">海家宅</text><text x="4142" y="360">建新</text><text x="4318" y="882">星火</text><text x="4640" y="806">勤奋村</text><text x="4760" y="933">丁家宅</text></g>
<g fill="#5a5a5a" font-size="32.500"><text x="1261" y="87">上海大学</text><text x="1356" y="741">上海西站</text><text x="1457" y="294">大场体育中心</text><text x="1607" y="664">普陀体育中心</text><text x="1783" y="571" fill="#4a6b4d">大宁灵石公园</text><text x="1907" y="893">上海站</text><text x="2400" y="213">上海财经大学</text><text x="2020" y="470">精武体育馆</text><text x="2844" y="293">上海理工大学</text><text x="2964" y="421">上海理工大</text><text x="2964" y="451">学南校区</text><text x="2903" y="52" fill="#4a6b4d">森林公园</text><text x="3998" y="556">上海金融学院</text></g>
</g>
<!-- shields -->
<g font-family="'Noto Sans',sans-serif" font-weight="700" font-size="27" fill="#fff" text-anchor="middle">
<g fill="#65a03d"><rect x="885" y="60" width="68" height="50" rx="5"/><rect x="858" y="276" width="68" height="50" rx="5"/><rect x="411" y="842" width="56" height="48" rx="5"/><rect x="3801" y="391" width="68" height="48" rx="5"/><rect x="4207" y="238" width="103" height="49" rx="5"/><rect x="4582" y="871" width="101" height="49" rx="5"/></g>
<path d="M887 63H951M860 279H924M3803 394H3867" stroke="#d3a04e" stroke-width="7"/><path d="M413 845H465M4209 241H4308M4584 874H4681" stroke="#d4605c" stroke-width="7"/>
<g fill="#c9a52e" stroke="#94791e" stroke-width="3"><rect x="4384" y="653" width="76" height="33" rx="6"/><rect x="4036" y="865" width="76" height="33" rx="6"/></g>
<g fill="#fff" stroke="#888" stroke-width="3"><rect x="3568" y="698" width="70" height="30" rx="4"/><rect x="3865" y="683" width="70" height="30" rx="4"/></g>
<text x="919" y="96">S20</text><text x="892" y="312">S20</text><text x="439" y="876">G2</text><text x="3835" y="426">S20</text><text x="4259" y="273">G1501</text><text x="4632" y="906">G1501</text><text x="4422" y="679">S221</text><text x="4074" y="891">S222</text><g fill="#555" font-weight="400" font-size="26"><text x="3605" y="723">X581</text><text x="3900" y="707">X581</text></g></g>
<g><g fill="#4c98d8"><rect x="1190" y="862" width="135" height="56" rx="7"/><rect x="2319" y="680" width="135" height="56" rx="7"/><rect x="2538" y="737" width="135" height="56" rx="7"/></g><g fill="#fff" font-size="38"><text x="1200" y="904">普陀区</text><text x="2329" y="722">虹口区</text><text x="2548" y="780">杨浦区</text></g></g>
<!-- driven route -->
<path d="M2522 451L2548 443L2580 420L2602 491Q2620 493 2640 476L2668 440L2699 548L2760 510L2800 485M2750 438L2800 470L2820 520L2890 665L2980 765L3065 845L3103 802L3152 805L3180 855L3238 940M2975 745L3010 795L3065 845L2998 790Z" fill="none" stroke="#000" stroke-width="12" stroke-linejoin="round" stroke-linecap="round"/>
<path d="M2670 475L2695 460" stroke="#000" stroke-opacity=".4" stroke-width="14" stroke-linecap="round"/><path d="M2668 482Q2665 465 2651 455Q2636 432 2645 420Q2652 409 2669 409Q2696 411 2697 437Q2695 455 2683 461Q2670 470 2668 482Z" fill="#ea2b2e" stroke="#b7171c" stroke-width="2.500"/>
<!-- pan and zoom control -->
<circle cx="141" cy="122" r="60" fill="#777" opacity=".5"/><circle cx="141" cy="119" r="58" fill="#f8f8fa" stroke="#9b9b9b" stroke-width="3"/><path d="M127 89L141 76L155 89M127 150L141 163L155 150M110 105L97 119L110 133M172 105L185 119L172 133" stroke="#3d7ed8" stroke-width="7" fill="none"/>
<rect x="133" y="240" width="16" height="340" fill="#eee" stroke="#888" stroke-width="3"/><rect x="135" y="385" width="12" height="190" fill="#8cb1f3"/><path d="M135 255H147M135 285H147M135 315H147M135 345H147" stroke="#aaa" stroke-width="2"/>
<g fill="#fbfbfb" stroke="#8d8d8d" stroke-width="3"><rect x="116" y="197" width="50" height="51" rx="6"/><rect x="116" y="575" width="50" height="51" rx="6"/><rect x="116" y="362" width="50" height="26" rx="5"/></g><path d="M130 222H153M141 210V234M130 600H153M127 375H155" stroke="#477fdd" stroke-width="5"/>
<rect x="5175" y="30" width="121" height="120" fill="#333" fill-opacity=".27"/><path d="M5217 69H5229L5225 73L5233 81L5229 85L5221 77L5217 81ZM5253 69H5241L5245 73L5237 81L5241 85L5249 77L5253 81ZM5217 105H5229L5225 101L5233 93L5229 89L5221 97L5217 93ZM5253 105H5241L5245 101L5237 93L5241 89L5249 97L5253 93Z" fill="#fff"/>
</svg>
            <div class="absolute top-[139px] left-[891px] flex h-[22px] w-[248px] items-center justify-center border border-[#c9c9c9] bg-white/75 whitespace-nowrap text-[12px]">目的地 121.53897059901,31.288720326599</div>
          </div>
          <!-- detail tabs -->
          <div class="mt-[31px] flex text-[14px] text-[#555] text-center leading-[35px]">
            <div class="h-[39px] w-[154px] rounded-t-sm border-t-2 border-l border-t-[#f48c00] border-l-[#d9d9d9] bg-[#f4f4f4] leading-[36px] text-[#fb7d13]">司机信息</div>
            <div class="h-[39px] w-[154px] border border-r-0 border-[#d9d9d9]">乘客信息</div>
            <div class="h-[39px] w-[154px] border border-r-0 border-[#d9d9d9]">投诉信息</div>
            <div class="h-[39px] w-[154px] border border-[#d9d9d9]">财务信息</div>
            <div class="flex-1 border-b border-[#d9d9d9]"></div>
          </div>
          <div class="h-[157px] border-x border-[#d9d9d9] bg-[#f4f4f4] pt-[20px] pl-[20px]">
            <div class="grid grid-cols-[285px_285px_285px_285px_auto] leading-10 text-[#222] [&_i]:mr-[15px] [&_i]:not-italic [&_i]:text-[#999]">
              <div><i>司机姓名</i>陆建非</div><div><i>手机号</i>13816349292</div><div><i>出租公司</i>亚通出租</div><div><i>车牌号</i>沪FW1819</div><div><i>订单数</i>2522</div>
              <div><i>好评数</i>2503</div><div><i>警告</i>1</div><div><i>禁用次数</i>0</div><div><i>总滴米</i>-195</div>
            </div>
            <button class="mt-[10px] ml-[729px] h-[32px] w-[90px] rounded-[3px] bg-[#f48c00] font-bold text-white">查看详情</button>
          </div>
        </main>
      </div>
    </div>
    <div class="w-[10px] bg-linear-to-r from-[#dedede] to-[#f6f6f6]"><div class="h-[684px] w-[10px] rounded-full bg-linear-to-r from-[#a9a9a9] to-[#c2c2c2]"></div></div>
  </div>
  <div class="absolute bottom-[-10px] left-[725px] h-[50px] w-[470px] bg-linear-to-b from-transparent to-black/10 blur-[12px]"></div>
</div>

<!-- desktop and dock -->
<footer class="relative flex h-[25px] justify-center bg-linear-to-r from-[#4a3d29] via-[#6c5631] via-40% to-[#3b2f1c]">
  <svg class="absolute inset-0 h-[25px] w-[1920px]" viewBox="0 0 1920 25"><g fill="#b08a50" fill-opacity=".45"><circle cx="50" cy="12" r="1.500"/><ellipse cx="205" cy="21" rx="6" ry="2"/><circle cx="280" cy="16" r="1.500"/><circle cx="360" cy="10" r="1.500"/><circle cx="442" cy="10" r="1.500"/><circle cx="540" cy="15" r="1.500"/><circle cx="620" cy="5" r="1.500"/><circle cx="690" cy="18" r="1.500"/><ellipse cx="1205" cy="13" rx="6" ry="1.500"/><circle cx="1290" cy="17" r="1.500"/><circle cx="1420" cy="8" r="1.500"/><circle cx="1530" cy="15" r="1.500"/><circle cx="1690" cy="9" r="1.500"/><circle cx="1820" cy="18" r="1.500"/></g></svg>
  <svg class="absolute top-[-1px] left-[748px] h-[26px] w-[424px]" viewBox="748 1054 424 26" font-family="'Liberation Sans',sans-serif" font-weight="700">
    <path d="M748 1080V1057Q748 1054 751 1054H1169Q1172 1054 1172 1057V1080Z" fill="#cdcdcd"/>
    <rect x="751" y="1059" width="13" height="13" fill="#27a4ef"/><path d="M758 1059H764V1072H759Q757 1067 756.500 1066H758.500Z" fill="#e7f2fb"/><path d="M753 1068Q757 1071 762 1068M754 1062V1064M761 1062V1064" stroke="#1c3c68" fill="none"/>
    <circle cx="776" cy="1065" r="6.700" fill="#1e8ee8"/><path d="M780 1060L777 1066L772 1070L775 1064Z" fill="#fff"/><path d="M780 1060L777 1066L775 1064Z" fill="#e43"/>
    <circle cx="794" cy="1065" r="7" fill="#e5433a"/><path d="M787.500 1062A7 7 0 0 0 793 1072L796 1067Z" fill="#3aa757"/><path d="M800.500 1063A7 7 0 0 1 793 1072L797 1066Z" fill="#fc3"/><circle cx="794" cy="1065" r="3.300" fill="#fff"/><circle cx="794" cy="1065" r="2.500" fill="#4285f4"/>
    <rect x="806" y="1059" width="12" height="12.500" fill="#fafafa" transform="rotate(-5 812 1065)"/><path d="M806 1060.500L817 1059" stroke="#e0463c" stroke-width="3"/><text x="809.500" y="1070" font-size="8" fill="#444">2</text>
    <rect x="824" y="1059" width="12" height="12" fill="#fdfbea" transform="rotate(-5 830 1065)"/><path d="M824 1060L836 1059" stroke="#ecc75a" stroke-width="2"/>
    <path d="M842 1059L854 1060L852 1072L843 1071Z" fill="#f7f7f7"/><path d="M842 1060H853" stroke="#e8912f" stroke-width="2"/><path d="M844 1063H850V1066H844Z" fill="#49a1d8"/><path d="M854 1062L847 1071" stroke="#e59028" stroke-width="1.700"/>
    <path d="M861 1071V1068" stroke="#2aa3e8" stroke-width="2.500"/><path d="M864 1071V1064" stroke="#2fc2a0" stroke-width="2.500"/><path d="M867.500 1071V1060" stroke="#40c44e" stroke-width="2.500"/><path d="M871 1071V1062" stroke="#e83f5c" stroke-width="2.500"/>
    <path d="M878 1058H890V1063H878Z" fill="#219ce3"/><path d="M881 1060H886" stroke="#fff"/><path d="M884 1063V1072M880 1072H888" stroke="#999" stroke-width="1.300"/>
    <circle cx="902" cy="1065" r="6.700" fill="#f5851f"/><path d="M898 1062Q900 1061 902 1062.500Q904 1061 906 1062V1068Q904 1067 902 1068.500Q900 1067 898 1068ZM902 1062V1068" fill="#fff" stroke="#f5851f" stroke-width=".7"/>
    <circle cx="920" cy="1065" r="6.700" fill="#2196f3"/><path d="M917 1069L921 1061M919 1061L923.500 1069M916 1067H924" stroke="#fff" stroke-width="1.400"/>
    <rect x="931" y="1059" width="13.500" height="13" rx="1" fill="#6e767b"/><circle cx="938" cy="1065.500" r="4.500" fill="none" stroke="#222" stroke-width="2"/><circle cx="938" cy="1065.500" r="1.500" fill="#ddd"/>
    <ellipse cx="954" cy="1063.500" rx="6.500" ry="5" fill="#50c14a"/><ellipse cx="959" cy="1068" rx="5" ry="4" fill="#eee"/><circle cx="962" cy="1059" r="3.200" fill="#ef4343"/>
    <rect x="967" y="1058" width="14" height="14" rx="3" fill="#e82b24"/><path d="M976 1060Q974 1059 974 1061L975 1066Q974 1069 972 1067Q972 1064 975 1064Q979 1065 977 1069Q973 1071 970 1068Q969 1065 971 1063" stroke="#fff" fill="none" stroke-width="1.200"/>
    <rect x="985.500" y="1059" width="13" height="12" rx="1" fill="#bd2932" transform="rotate(-12 992 1065)"/><path d="M996 1062Q989 1060 988 1066Q990 1071 996 1068V1065H992" stroke="#fff" stroke-width="2" fill="none"/><rect x="993" y="1056.500" width="7" height="4.500" rx="2.200" fill="#ef5151"/>
    <path d="M1003 1061L1014 1058L1018 1070L1007 1072Z" fill="#6351bd"/><text x="1007" y="1069" font-size="8" fill="#fff">D</text>
    <rect x="1021.500" y="1058.500" width="13.500" height="13.500" rx="2" fill="#36a73f"/><path d="M1024 1062L1027 1060Q1033 1059 1032 1069L1029 1070L1028 1067Q1024 1067 1024 1062" fill="#233"/>
    <path d="M1040 1059L1053 1058L1052 1070L1040 1068Z" fill="#5b7a9b"/><path d="M1040 1063L1052 1064M1040 1067L1050 1067" stroke="#e6e6e6" stroke-width="2"/><circle cx="1051" cy="1069" r="3" fill="#746a66"/>
    <rect x="1056.500" y="1059" width="15" height="12.500" rx="1" fill="#171717"/><path d="M1058 1062H1062" stroke="#3f4" stroke-width="2"/>
    <ellipse cx="1081.500" cy="1065" rx="5.500" ry="6.800" fill="#1c1c1c"/><ellipse cx="1081.500" cy="1068" rx="4" ry="4" fill="#f7f7f7"/><path d="M1077 1065Q1082 1067 1086 1065" stroke="#e62a24" stroke-width="2" fill="none"/><ellipse cx="1081.500" cy="1062" rx="1.500" ry="1" fill="#fb0"/><circle cx="1087.500" cy="1059.500" r="3.200" fill="#ef4343"/>
    <rect x="1093" y="1058" width="14" height="13.500" rx="1.500" fill="#55524f"/><text x="1096.500" y="1068" font-size="10" fill="#f89422">S</text>
    <ellipse cx="1116" cy="1067" rx="6.500" ry="4.500" fill="#5b66c0"/><text x="1111" y="1069.500" font-size="7" fill="#fff">php</text><path d="M1125 1060Q1119 1061 1124 1065Q1127 1069 1121 1071" stroke="#f07c1c" stroke-width="2.300" fill="none"/>
    <path d="M1131.500 1059V1076" stroke="#8f8f8f"/>
    <path d="M1138 1058H1147V1067H1138Z" fill="#8fa1bb"/><path d="M1140 1060H1149V1070H1140Z" fill="#6da188"/><path d="M1142 1062L1151 1063L1150 1072L1142 1071Z" fill="#7d58b4"/>
    <path d="M1157 1058.500H1168L1166.500 1072H1158.500Z" fill="#ececec" stroke="#fafafa"/><path d="M1160 1061L1161 1071M1165 1061L1164 1071" stroke="#d2d2d2"/>
    <g fill="#333"><circle cx="757.500" cy="1076.500" r="1.500"/><circle cx="793.500" cy="1076.500" r="1.500"/><circle cx="865.500" cy="1076.500" r="1.500"/><circle cx="955.500" cy="1076.500" r="1.500"/><circle cx="973.500" cy="1076.500" r="1.500"/><circle cx="991.500" cy="1076.500" r="1.500"/><circle cx="1009.500" cy="1076.500" r="1.500"/><circle cx="1027.500" cy="1076.500" r="1.500"/><circle cx="1045.500" cy="1076.500" r="1.500"/><circle cx="1063.500" cy="1076.500" r="1.500"/><circle cx="1081.500" cy="1076.500" r="1.500"/><circle cx="1099.500" cy="1076.500" r="1.500"/><circle cx="1117.500" cy="1076.500" r="1.500"/></g>
  </svg>
</footer>
</body>
</html>
